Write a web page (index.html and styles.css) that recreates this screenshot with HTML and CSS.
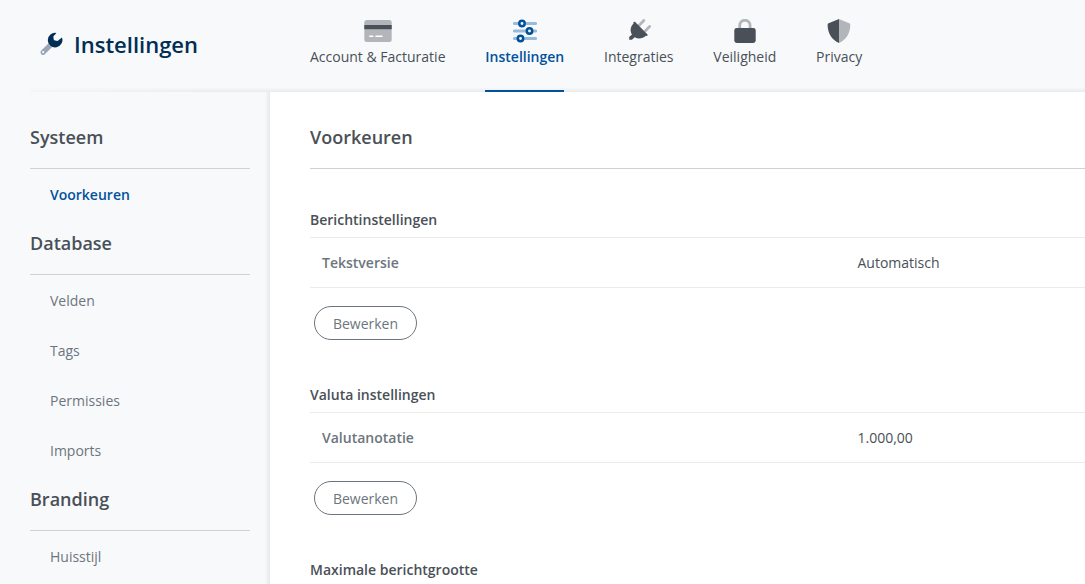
FILE: index.html
```html
<!DOCTYPE html>
<html lang="nl">
<head>
  <meta charset="UTF-8">
  <meta name="viewport" content="width=device-width, initial-scale=1.0">
  <title>Instellingen</title>
  <link rel="stylesheet" href="styles.css">
</head>
<body>
<header class="header">
  <h1 class="page-title">
    <svg class="title-icon" viewBox="0 0 24 24">
      <path d="M14 10.6 4 20.4" stroke="#98a6b5" stroke-width="5" stroke-linecap="round"/>
      <circle cx="4.2" cy="20.2" r="1.1" fill="#f8f9fb"/>
      <path d="M22.9 5.4A7.3 7.3 0 1 1 17.4 .9L14.3 4.6 14.9 8.3 18.6 8.9Z" fill="#002e55"/>
    </svg>
    Instellingen
  </h1>
  <nav class="tabs">
    <a class="tab">
      <svg width="28" height="24" viewBox="0 0 28 24">
        <rect x=".3" y="1" width="27.4" height="22" rx="2.5" fill="#b2b5b9"/>
        <rect x=".3" y="6" width="27.4" height="4.2" fill="#495057"/>
        <path d="M5.8 17.2h2.9M12 17.2h6" stroke="#fff" stroke-width="1.6" stroke-linecap="round"/>
      </svg>
      <span>Account &amp; Facturatie</span>
    </a>
    <a class="tab active">
      <svg width="24" height="24" viewBox="0 0 24 24">
        <path d="M1.4 4.5h21.2M1.4 12h21.2M1.4 19.5h21.2" stroke="#99bbd9" stroke-width="3" stroke-linecap="round"/>
        <g fill="#f8f9fb" stroke="#00529b" stroke-width="2.5">
          <circle cx="9" cy="4.5" r="2.7"/>
          <circle cx="16.5" cy="12" r="2.7"/>
          <circle cx="7.5" cy="19.5" r="2.7"/>
        </g>
      </svg>
      <span>Instellingen</span>
    </a>
    <a class="tab">
      <svg width="24" height="24" viewBox="0 0 24 24">
        <path d="M12.5 6 16.8 1.6M18.5 11.7 22.6 7.6" stroke="#b2b5b9" stroke-width="2.8" stroke-linecap="round"/>
        <path d="M8.2 3C7.2 2 5.7 3.4 6.6 4.4 3.2 7.6 2.8 12 5 15.4L2.2 18V20.8H4.9L7.7 18.2C11.5 20.6 15.8 19.6 18.8 16.8 19.9 17.7 21.3 16.3 20.3 15.3Z" fill="#495057"/>
      </svg>
      <span>Integraties</span>
    </a>
    <a class="tab">
      <svg width="24" height="24" viewBox="0 0 24 24">
        <path d="M6.7 10V6.5a5.2 5.2 0 0 1 10.4 0V10" fill="none" stroke="#b2b5b9" stroke-width="2.8"/>
        <rect x="1.3" y="9" width="21.4" height="15" rx="2.4" fill="#495057"/>
      </svg>
      <span>Veiligheid</span>
    </a>
    <a class="tab">
      <svg width="24" height="24" viewBox="0 0 24 24">
        <path d="M12 0 1.6 4.2Q.6 4.6.6 5.8C.6 14 5 21.3 12 24Z" fill="#495057"/>
        <path d="M12 0 22.2 4.2Q23.3 4.6 23.3 5.8C23.3 14 19 21.3 12 24Z" fill="#b2b5b9"/>
      </svg>
      <span>Privacy</span>
    </a>
  </nav>
</header>

<div class="layout">
  <aside class="sidebar">
    <h2 class="section-title">Systeem</h2>
    <a class="side-item active">Voorkeuren</a>
    <h2 class="section-title">Database</h2>
    <a class="side-item">Velden</a>
    <a class="side-item">Tags</a>
    <a class="side-item">Permissies</a>
    <a class="side-item">Imports</a>
    <h2 class="section-title">Branding</h2>
    <a class="side-item">Huisstijl</a>
  </aside>

  <main class="content">
    <h2 class="section-title">Voorkeuren</h2>

    <section class="setting">
      <h3>Berichtinstellingen</h3>
      <div class="setting-row">
        <div class="label">Tekstversie</div>
        <div class="value">Automatisch</div>
      </div>
      <button class="btn">Bewerken</button>
    </section>

    <section class="setting">
      <h3>Valuta instellingen</h3>
      <div class="setting-row">
        <div class="label">Valutanotatie</div>
        <div class="value">1.000,00</div>
      </div>
      <button class="btn">Bewerken</button>
    </section>

    <section class="setting">
      <h3>Maximale berichtgrootte</h3>
    </section>
  </main>
</div>
</body>
</html>
```
FILE: styles.css
```css
* {
  box-sizing: border-box;
}

body {
  margin: 0;
  height: 100vh;
  overflow: hidden;
  font-family: 'Open Sans', sans-serif;
  font-size: 14px;
  line-height: 20px;
  color: #495057;
  background-color: #f8f9fb;
}

h1, h2, h3 {
  margin: 0;
}

/* Soft edge under the header, fading out to the left */
.header {
  display: flex;
  height: 92px;
  padding-left: 39px;
  background:
    linear-gradient(to right, #f8f9fb 30px, rgba(248, 249, 251, 0.7) 31px, rgba(248, 249, 251, 0) 220px) left bottom / 270px 4px no-repeat,
    linear-gradient(to bottom, rgba(0, 0, 0, 0.01), rgba(0, 0, 0, 0.06)) left bottom / 100% 4px no-repeat;
}

.page-title {
  display: flex;
  align-items: center;
  gap: 11px;
  width: 271px;
  height: 88px;
  font-size: 22px;
  font-weight: 600;
  color: #002e55;
}

.title-icon {
  width: 24px;
  height: 24px;
}

.tabs {
  display: flex;
  gap: 39.8px;
}

.tab {
  display: flex;
  flex-direction: column;
  align-items: center;
  gap: 4px;
  height: 92px;
  padding-top: 19px;
  border-bottom: 2px solid transparent;
}

.tab.active {
  color: #00529b;
  font-weight: 600;
  border-bottom-color: #00529b;
}

.layout {
  display: flex;
  height: 492px;
}

.sidebar {
  width: 270px;
  padding: 22px 20px 0 30px;
  background: linear-gradient(to left, rgba(0, 0, 0, 0.07), rgba(0, 0, 0, 0)) right top / 5px 100% no-repeat;
}

.section-title {
  height: 55px;
  margin-bottom: 1px;
  padding-top: 11px;
  border-bottom: 1px solid #d0d3d6;
  font-size: 18px;
  font-weight: 600;
  line-height: 24px;
}

.side-item {
  display: block;
  padding-left: 20px;
  line-height: 50px;
  color: #6c757d;
}

.side-item.active {
  color: #00529b;
  font-weight: 600;
}

.side-item:last-child {
  height: 42px;
}

.content {
  flex: 1;
  padding: 22px 0 0 40px;
  background-color: #fff;
}

.setting {
  height: 175px;
}

.setting:last-child {
  height: auto;
}

.content .section-title {
  margin-bottom: 41px;
}

.setting h3 {
  height: 27px;
  font-size: 14px;
  font-weight: 600;
}

.setting:last-child h3 {
  height: 20px;
}

.setting-row {
  display: flex;
  height: 51px;
  padding-left: 12px;
  border-top: 1px solid #ebebeb;
  border-bottom: 1px solid #ebebeb;
  line-height: 49px;
}

.label {
  width: 535.5px;
  color: #6c757d;
  font-weight: 600;
}

.btn {
  width: 103px;
  height: 34px;
  margin: 18px 0 0 4px;
  padding: 0;
  border: 1px solid #6c757d;
  border-radius: 17px;
  background-color: #fff;
  color: #6c757d;
  font-family: inherit;
  font-size: 14px;
}
```
